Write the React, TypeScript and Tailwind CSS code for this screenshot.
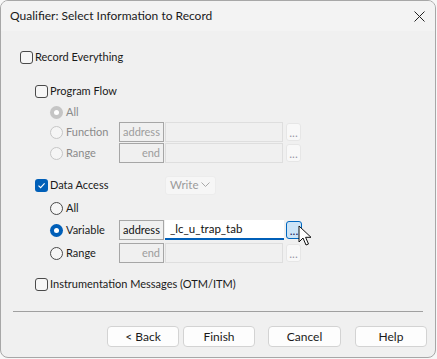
import React from "react"

const font = { fontFamily: "'Segoe UI', Lato, 'Noto Sans', sans-serif" }

function Checkbox({ checked }: { checked?: boolean }) {
  if (checked) {
    return (
      <span className="flex h-[13px] w-[13px] items-center justify-center rounded-[3px] bg-[#005fb8]">
        <svg width="9" height="9" viewBox="0 0 9 9">
          <path d="M1.5 4.6 L3.6 6.7 L7.6 2.3" fill="none" stroke="white" strokeWidth="1.1" />
        </svg>
      </span>
    )
  }
  return <span className="h-[13px] w-[13px] rounded-[3px] border border-[#4a4a4a] bg-[#f6f6f6]" />
}

function Radio({ checked, disabled }: { checked?: boolean; disabled?: boolean }) {
  if (checked && disabled) {
    return (
      <span className="flex h-[13px] w-[13px] items-center justify-center rounded-full bg-[#c5c5c5]">
        <span className="h-[5px] w-[5px] rounded-full bg-white" />
      </span>
    )
  }
  if (checked) {
    return (
      <span className="flex h-[13px] w-[13px] items-center justify-center rounded-full bg-[#005fb8]">
        <span className="h-[5px] w-[5px] rounded-full bg-white" />
      </span>
    )
  }
  return (
    <span
      className={
        disabled
          ? "h-[13px] w-[13px] rounded-full border border-[#c6c6c6] bg-[#f5f5f5]"
          : "h-[13px] w-[13px] rounded-full border border-[#4a4a4a] bg-[#f6f6f6]"
      }
    />
  )
}

function Dots({ active }: { active?: boolean }) {
  return (
    <span
      className={
        active
          ? "ml-[2px] flex h-[18px] w-[16px] items-end justify-center rounded-[3px] border border-[#0067c0] bg-[#cce4f7] pb-[1px] text-[12px] leading-[12px] text-[#1a1a5a]"
          : "ml-[3px] flex h-[18px] w-[15px] items-end justify-center rounded-[3px] border border-[#e6e6e6] bg-[#f8f8f8] pb-[1px] text-[12px] leading-[12px] text-[#9a9aa8]"
      }
    >
      ...
    </span>
  )
}

function AddrRow({
  label,
  value,
  right,
  enabled,
  focused,
}: {
  label: string
  value?: string
  right?: boolean
  enabled?: boolean
  focused?: boolean
}) {
  return (
    <div className="flex items-center">
      <span
        className={
          "flex h-[20px] w-[45px] items-center border border-[#a6a6a6] px-[3px] text-[11px] " +
          (right ? "justify-end " : "") +
          (enabled ? "text-[#111]" : "text-[#9d9d9d]")
        }
      >
        {label}
      </span>
      <span
        className={
          focused
            ? "ml-[1px] flex h-[20px] w-[119px] items-center border-b-2 border-[#005fb8] bg-white pl-[5px] text-[11.5px] text-[#111]"
            : "ml-[1px] h-[20px] w-[118px] border border-[#dedede] bg-[#f0f0f0]"
        }
      >
        {value}
      </span>
      <Dots active={focused} />
    </div>
  )
}

export default function App() {
  return (
    <div className="h-[359px] w-[437px] bg-[#f7f7f7]" style={font}>
      <div className="relative flex h-[358px] w-[436px] flex-col overflow-hidden rounded-[8px] border border-[#a7a7a7] bg-[#f0f0f0] text-[11px] text-[#1a1a1a]">
        <div className="flex h-[30px] items-center justify-between bg-[#f3f3f3] pl-[9px] pr-[10px]">
          <span className="text-[12px]">Qualifier: Select Information to Record</span>
          <svg width="11" height="11" viewBox="0 0 11 11">
            <path d="M0.5 0.5 L10.5 10.5 M10.5 0.5 L0.5 10.5" stroke="#222" strokeWidth="1" />
          </svg>
        </div>

        <div className="flex flex-col pl-[19px]">
          <label className="mt-[16px] flex h-[20px] items-center gap-[2px]">
            <Checkbox />
            <span>Record Everything</span>
          </label>

          <div className="ml-[15px] flex flex-col">
            <label className="mt-[14px] flex h-[20px] items-center gap-[2px]">
              <Checkbox />
              <span>Program Flow</span>
            </label>
            <div className="ml-[15px] flex flex-col">
              <div className="mt-[1px] flex h-[20px] items-center gap-[3px] text-[#8a8a8a]">
                <Radio checked disabled />
                <span>All</span>
              </div>
              <div className="flex h-[20px] items-center">
                <div className="flex w-[69px] items-center gap-[3px] text-[#8a8a8a]">
                  <Radio disabled />
                  <span>Function</span>
                </div>
                <AddrRow label="address" />
              </div>
              <div className="mt-[1px] flex h-[20px] items-center">
                <div className="flex w-[69px] items-center gap-[3px] text-[#8a8a8a]">
                  <Radio disabled />
                  <span>Range</span>
                </div>
                <AddrRow label="end" right />
              </div>
            </div>

            <div className="mt-[12px] flex h-[20px] items-center">
              <label className="flex w-[130px] items-center gap-[2px]">
                <Checkbox checked />
                <span>Data Access</span>
              </label>
              <span className="flex h-[19px] w-[51px] items-center justify-between rounded-[3px] border border-[#ececec] bg-[#f6f6f6] pl-[4px] pr-[5px] text-[11.5px] text-[#9b9b9b]">
                Write
                <svg width="9" height="6" viewBox="0 0 9 6">
                  <path d="M0.5 0.5 L4.5 4.5 L8.5 0.5" fill="none" stroke="#a8a8a8" strokeWidth="1" />
                </svg>
              </span>
            </div>
            <div className="ml-[15px] flex flex-col">
              <div className="mt-[3px] flex h-[20px] items-center gap-[3px]">
                <Radio />
                <span>All</span>
              </div>
              <div className="mt-[2px] flex h-[20px] items-center">
                <div className="flex w-[69px] items-center gap-[3px]">
                  <Radio checked />
                  <span>Variable</span>
                </div>
                <AddrRow label="address" value="_lc_u_trap_tab" enabled focused />
              </div>
              <div className="mt-[3px] flex h-[20px] items-center">
                <div className="flex w-[69px] items-center gap-[3px]">
                  <Radio />
                  <span>Range</span>
                </div>
                <AddrRow label="end" right />
              </div>
            </div>

            <label className="mt-[11px] flex h-[20px] items-center gap-[2px]">
              <Checkbox />
              <span>Instrumentation Messages (OTM/ITM)</span>
            </label>
          </div>
        </div>

        <div className="mx-[12px] mt-[17px] h-px bg-[#a0a0a0]" />

        <div className="mt-[14px] flex items-center pl-[106px]">
          {["< Back", "Finish"].map((t) => (
            <button
              key={t}
              className="mr-[4px] flex h-[21px] w-[72px] items-center justify-center rounded-[4px] border border-[#d3d3d3] bg-[#fdfdfd] text-[12px]"
            >
              {t}
            </button>
          ))}
          <button className="ml-[9px] flex h-[21px] w-[73px] items-center justify-center rounded-[4px] border border-[#d3d3d3] bg-[#fdfdfd] text-[12px]">
            Cancel
          </button>
          <button className="ml-[14px] flex h-[21px] w-[72px] items-center justify-center rounded-[4px] border border-[#d3d3d3] bg-[#fdfdfd] text-[12px]">
            Help
          </button>
        </div>

        <svg className="absolute left-[297px] top-[224px]" width="14" height="22" viewBox="0 0 14 22">
          <path d="M1 1 L1 17 L5 13 L8 20 L10.5 19 L7.6 12.3 L13 12.3 Z" fill="white" stroke="#111" strokeWidth="1" strokeLinejoin="round" />
        </svg>
      </div>
    </div>
  )
}
